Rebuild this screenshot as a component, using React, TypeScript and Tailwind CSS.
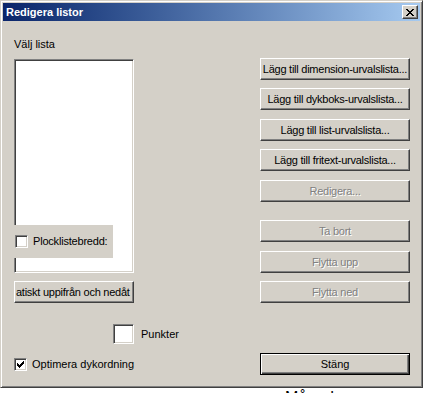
import React from 'react';

const btn =
  'flex h-[22px] w-full items-center justify-center whitespace-nowrap bg-[#d4d0c8] border border-t-white border-l-white border-r-[#404040] border-b-[#404040] shadow-[inset_-1px_-1px_#808080] text-[11px] tracking-[-0.25px] text-black';

const sunken =
  'border border-t-[#808080] border-l-[#808080] border-r-white border-b-white shadow-[inset_1px_1px_#404040,inset_-1px_-1px_#d4d0c8] bg-white';

function Button({ label, disabled, className = '' }: { label: string; disabled?: boolean; className?: string }) {
  return (
    <div className={`${btn} ${className}`}>
      <span className={disabled ? 'text-[#808080] [text-shadow:1px_1px_0_#fff]' : ''}>{label}</span>
    </div>
  );
}

function CheckBox({ checked }: { checked?: boolean }) {
  return (
    <div className={`${sunken} flex h-[13px] w-[13px] shrink-0 items-center justify-center`}>
      {checked && (
        <svg width="7" height="7" viewBox="0 0 7 7" shapeRendering="crispEdges">
          <path
            fill="#000"
            d="M0 2h1v3H0z M1 3h1v3H1z M2 4h1v3H2z M3 3h1v3H3z M4 2h1v3H4z M5 1h1v3H5z M6 0h1v3H6z"
          />
        </svg>
      )}
    </div>
  );
}

export default function App() {
  return (
    <div className="h-[393px] w-[423px] overflow-hidden bg-white font-['Liberation_Sans',Arial,sans-serif] text-[11px] text-black">
      <div className="flex h-[388px] w-[423px] flex-col border border-t-[#d4d0c8] border-l-[#d4d0c8] border-r-[#404040] border-b-[#404040] bg-[#d4d0c8] p-[2px] shadow-[inset_1px_1px_#fff,inset_-1px_-1px_#808080]">
        {/* title bar */}
        <div className="flex h-[18px] shrink-0 items-center justify-between bg-linear-to-r from-[#0a246a] to-[#a6caf0] pl-[3px] pr-[2px]">
          <span className="text-[11px] font-bold leading-none text-white">Redigera listor</span>
          <div className="flex h-[14px] w-[16px] items-center justify-center bg-[#d4d0c8] border border-t-white border-l-white border-r-[#404040] border-b-[#404040] shadow-[inset_-1px_-1px_#808080]">
            <svg width="8" height="7" viewBox="0 0 8 7" shapeRendering="crispEdges">
              <path
                fill="#000"
                d="M0 0h2v1H0z M6 0h2v1H6z M1 1h2v1H1z M5 1h2v1H5z M2 2h4v1H2z M3 3h2v1H3z M2 4h4v1H2z M1 5h2v1H1z M5 5h2v1H5z M0 6h2v1H0z M6 6h2v1H6z"
              />
            </svg>
          </div>
        </div>

        {/* body */}
        <div className="flex flex-1 flex-col pl-[11px] pr-[10px]">
          <div className="flex items-start justify-between">
            <div className="flex w-[120px] flex-col">
              <div className="mt-[17px] h-[13px] leading-[13px]">Välj lista</div>
              <div className={`${sunken} relative mt-[8px] h-[214px] w-[120px]`}>
                <div className="absolute left-[-1px] top-[165px] flex h-[33px] w-[99px] items-center gap-[5px] bg-[#d4d0c8] pl-[1px]">
                  <CheckBox />
                  <span className="tracking-[-0.2px]">Plocklistebredd:</span>
                </div>
              </div>
              <div className={`${btn} mt-[8px] justify-start overflow-hidden pl-[1px]`}>
                <span>atiskt uppifrån och nedåt</span>
              </div>
            </div>

            <div className="mt-[37px] flex w-[150px] flex-col">
              <Button label="Lägg till dimension-urvalslista..." />
              <Button label="Lägg till dykboks-urvalslista..." className="mt-[8px]" />
              <Button label="Lägg till list-urvalslista..." className="mt-[9px]" />
              <Button label="Lägg till fritext-urvalslista..." className="mt-[8px]" />
              <Button label="Redigera..." disabled className="mt-[9px]" />
              <Button label="Ta bort" disabled className="mt-[18px]" />
              <Button label="Flytta upp" disabled className="mt-[9px]" />
              <Button label="Flytta ned" disabled className="mt-[8px]" />
            </div>
          </div>

          <div className="mt-[21px] flex h-[20px] items-center pl-[99px]">
            <div className={`${sunken} h-[20px] w-[21px]`} />
            <span className="ml-[7px]">Punkter</span>
          </div>

          <div className="mt-[9px] flex items-center justify-between">
            <div className="flex items-center gap-[5px]">
              <CheckBox checked />
              <span>Optimera dykordning</span>
            </div>
            <div className="flex h-[22px] w-[150px] items-center justify-center bg-[#d4d0c8] border border-black shadow-[inset_1px_1px_#fff,inset_-1px_-1px_#404040,inset_-2px_-2px_#808080]">
              Stäng
            </div>
          </div>
        </div>
      </div>
      <div className="mt-[2px] pl-[285px] text-[16px] leading-none">Månad</div>
    </div>
  );
}
